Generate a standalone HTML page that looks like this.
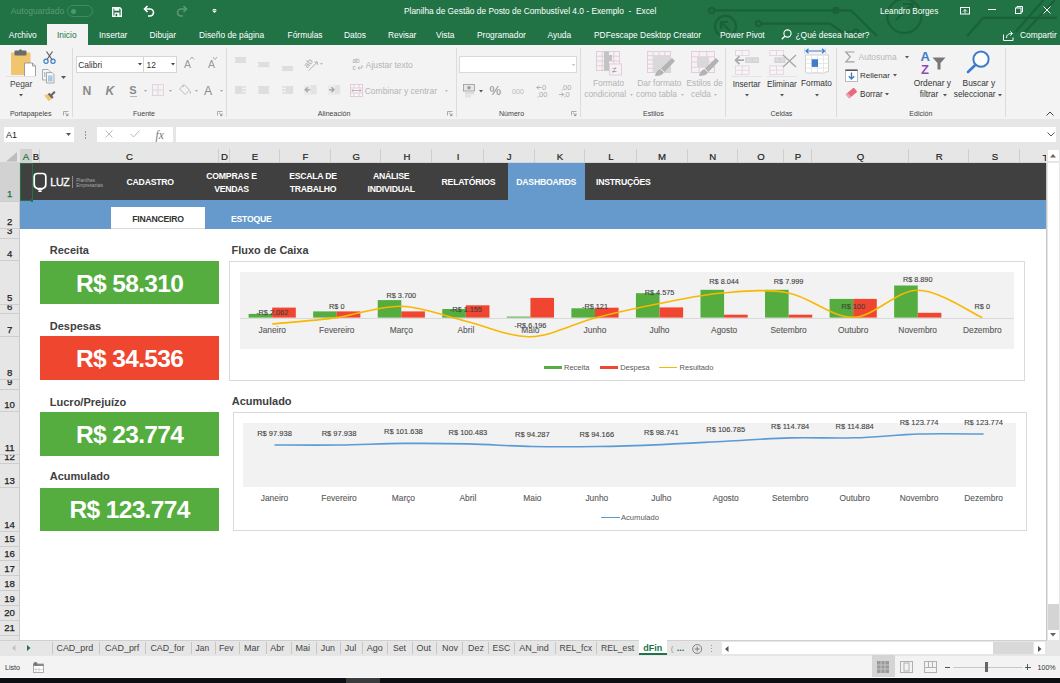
<!DOCTYPE html>
<html><head><meta charset="utf-8">
<style>
*{margin:0;padding:0;box-sizing:border-box}
html,body{width:1060px;height:683px;overflow:hidden;background:#fff;font-family:"Liberation Sans",sans-serif}
.a{position:absolute}
.t{position:absolute;white-space:nowrap;line-height:1}
svg{position:absolute;overflow:visible}
</style></head><body>
<div class="a" style="left:0px;top:0px;width:1060px;height:45px;background:#217346;"></div>
<svg class="a" style="left:0px;top:0px;" width="1060" height="45" viewBox="0 0 1060 45"><g stroke="#1a6139" stroke-width="2.2" fill="none">
<path d="M714 10.4 H851 L877 36"/><circle cx="711.7" cy="10.4" r="2.6"/><circle cx="835.8" cy="10.4" r="2.6"/>
<path d="M761 23.6 H830 L842 32 H852"/><circle cx="758.5" cy="23.6" r="2.6"/><circle cx="856" cy="32" r="2.6"/>
<circle cx="725.5" cy="26.4" r="10.5"/><path d="M730 31 L721 22 M721 29 V22 H728"/>
<circle cx="904.3" cy="16" r="17"/><path d="M896 20 L912.5 4 M903 4 H912.5 V13"/>
<path d="M967 36.3 L983.2 17.8 H1057"/><path d="M1015.4 32.2 L1043.4 0"/><path d="M1024.7 32.2 L1054.8 0"/>
</g></svg>
<div class="t" style="left:10.8px;top:7px;font-size:8.5px;color:#5c9a76;">Autoguardado</div>
<div class="a" style="left:67px;top:5px;width:26px;height:12px;border:1px solid #3f8a5f;border-radius:6px"></div>
<div class="a" style="left:71px;top:9px;width:5px;height:5px;background:#4f9670;border-radius:50%"></div>
<svg class="a" style="left:111.5px;top:6.5px;" width="10" height="10" viewBox="0 0 10 10"><path d="M0.7 0.7 H7.8 L9.3 2.2 V9.3 H0.7 Z" fill="none" stroke="#fff" stroke-width="1.4"/><rect x="2.3" y="0.7" width="5" height="3" fill="#fff"/><rect x="2.5" y="5.5" width="5" height="3.8" fill="#fff"/><rect x="3.6" y="6.8" width="1.6" height="2.5" fill="#217346"/></svg>
<svg class="a" style="left:142px;top:4px;" width="14" height="14" viewBox="0 0 14 14"><path d="M3 5 H8 A3.5 3.5 0 0 1 8 12 H6" stroke="#fff" stroke-width="1.6" fill="none"/><path d="M5.5 2 L2.5 5 L5.5 8" stroke="#fff" stroke-width="1.6" fill="none"/></svg>
<svg class="a" style="left:175px;top:4px;" width="14" height="14" viewBox="0 0 14 14"><path d="M11 5 H6 A3.5 3.5 0 0 0 6 12 H8" stroke="#5c9a76" stroke-width="1.6" fill="none"/><path d="M8.5 2 L11.5 5 L8.5 8" stroke="#5c9a76" stroke-width="1.6" fill="none"/></svg>
<svg class="a" style="left:212px;top:8.5px;" width="5" height="4" viewBox="0 0 5 4"><rect x="0.8" y="0" width="3.4" height="0.9" fill="#fff"/><path d="M0 1.6 H5 L2.5 4 Z" fill="#fff"/></svg>
<div class="t" style="left:404.0px;top:7px;font-size:8.35px;color:#fff;">Planilha de Gestão de Posto de Combustível 4.0 - Exemplo&nbsp; -&nbsp; Excel</div>
<div class="t" style="left:880.0px;top:8px;font-size:8.2px;color:#fff;">Leandro Borges</div>
<svg class="a" style="left:960px;top:6.5px;" width="10" height="7" viewBox="0 0 10 7"><rect x="0.5" y="0.5" width="9" height="6.5" stroke="#fff" fill="none"/><path d="M3 4.5 L5 2.5 L7 4.5 M5 2.5 V6.5" stroke="#fff" fill="none" stroke-width="0.9"/></svg>
<div class="a" style="left:988.3px;top:9px;width:7.5px;height:1px;background:#fff;"></div>
<svg class="a" style="left:1015px;top:6px;" width="8" height="8" viewBox="0 0 8 8"><rect x="0.5" y="2" width="5.5" height="5.5" stroke="#fff" fill="none"/><path d="M2 2 V0.5 H7.5 V6 H6" stroke="#fff" fill="none"/></svg>
<svg class="a" style="left:1042.5px;top:6px;" width="8" height="8" viewBox="0 0 8 8"><path d="M0.5 0.5 L7.5 7.5 M7.5 0.5 L0.5 7.5" stroke="#fff" stroke-width="1"/></svg>
<div class="a" style="left:47px;top:24px;width:41px;height:21px;background:#f3f3f3;"></div>
<div class="t" style="left:8.8px;top:31px;font-size:8.4px;color:#fff;">Archivo</div>
<div class="t" style="left:57.0px;top:31px;font-size:8.4px;color:#217346;">Inicio</div>
<div class="t" style="left:99.0px;top:31px;font-size:8.4px;color:#fff;">Insertar</div>
<div class="t" style="left:149.5px;top:31px;font-size:8.4px;color:#fff;">Dibujar</div>
<div class="t" style="left:199.0px;top:31px;font-size:8.4px;color:#fff;">Diseño de página</div>
<div class="t" style="left:287.6px;top:31px;font-size:8.4px;color:#fff;">Fórmulas</div>
<div class="t" style="left:344.0px;top:31px;font-size:8.4px;color:#fff;">Datos</div>
<div class="t" style="left:388.0px;top:31px;font-size:8.4px;color:#fff;">Revisar</div>
<div class="t" style="left:436.0px;top:31px;font-size:8.4px;color:#fff;">Vista</div>
<div class="t" style="left:477.0px;top:31px;font-size:8.4px;color:#fff;">Programador</div>
<div class="t" style="left:547.6px;top:31px;font-size:8.4px;color:#fff;">Ayuda</div>
<div class="t" style="left:594.0px;top:31px;font-size:8.4px;color:#fff;">PDFescape Desktop Creator</div>
<div class="t" style="left:720.0px;top:31px;font-size:8.4px;color:#fff;">Power Pivot</div>
<svg class="a" style="left:781px;top:29px;" width="11" height="11" viewBox="0 0 11 11"><circle cx="6.5" cy="4.5" r="3.6" stroke="#fff" stroke-width="1.1" fill="none"/><path d="M4 7 L0.8 10.2" stroke="#fff" stroke-width="1.3"/></svg>
<div class="t" style="left:795.5px;top:31px;font-size:8.4px;color:#fff;">¿Qué desea hacer?</div>
<svg class="a" style="left:1003.4px;top:30.5px;" width="12" height="10" viewBox="0 0 12 10"><path d="M0.5 3.5 V9.5 H10 V6.5" stroke="#fff" fill="none"/><path d="M3.5 7 C3.5 3.5 6 2.5 9 2.5 M7.2 0.5 L9.5 2.5 L7.2 4.5" stroke="#fff" fill="none"/></svg>
<div class="t" style="left:1020.0px;top:31px;font-size:8.4px;color:#fff;">Compartir</div>
<div class="a" style="left:0px;top:45px;width:1060px;height:74px;background:#f3f3f3;"></div>
<div class="a" style="left:72px;top:48px;width:1px;height:69px;background:#dcdcdc;"></div>
<div class="a" style="left:226px;top:48px;width:1px;height:69px;background:#dcdcdc;"></div>
<div class="a" style="left:455.5px;top:48px;width:1px;height:69px;background:#dcdcdc;"></div>
<div class="a" style="left:580px;top:48px;width:1px;height:69px;background:#dcdcdc;"></div>
<div class="a" style="left:725px;top:48px;width:1px;height:69px;background:#dcdcdc;"></div>
<div class="a" style="left:836.4px;top:48px;width:1px;height:69px;background:#dcdcdc;"></div>
<div class="a" style="left:1005.4px;top:48px;width:1px;height:69px;background:#dcdcdc;"></div>
<div class="t" style="left:9.9px;top:110px;font-size:7.05px;color:#444;">Portapapeles</div>
<div class="t" style="left:133.0px;top:110px;font-size:7.05px;color:#444;">Fuente</div>
<div class="t" style="left:317.8px;top:110px;font-size:7.05px;color:#444;">Alineación</div>
<div class="t" style="left:499.0px;top:110px;font-size:7.05px;color:#444;">Número</div>
<div class="t" style="left:643.0px;top:110px;font-size:7.05px;color:#444;">Estilos</div>
<div class="t" style="left:770.4px;top:110px;font-size:7.05px;color:#444;">Celdas</div>
<div class="t" style="left:909.3px;top:110px;font-size:7.05px;color:#444;">Edición</div>
<svg class="a" style="left:63px;top:111px;" width="6" height="5" viewBox="0 0 6 5"><path d="M0.5 4.5 V0.5 H5.5" stroke="#999" fill="none" stroke-width="0.8"/><path d="M2 1.8 L5 4.6 M5 2.5 V4.6 H3" stroke="#888" fill="none" stroke-width="0.8"/></svg>
<svg class="a" style="left:216.5px;top:111px;" width="6" height="5" viewBox="0 0 6 5"><path d="M0.5 4.5 V0.5 H5.5" stroke="#999" fill="none" stroke-width="0.8"/><path d="M2 1.8 L5 4.6 M5 2.5 V4.6 H3" stroke="#888" fill="none" stroke-width="0.8"/></svg>
<svg class="a" style="left:446.5px;top:111px;" width="6" height="5" viewBox="0 0 6 5"><path d="M0.5 4.5 V0.5 H5.5" stroke="#999" fill="none" stroke-width="0.8"/><path d="M2 1.8 L5 4.6 M5 2.5 V4.6 H3" stroke="#888" fill="none" stroke-width="0.8"/></svg>
<svg class="a" style="left:570.6px;top:111px;" width="6" height="5" viewBox="0 0 6 5"><path d="M0.5 4.5 V0.5 H5.5" stroke="#999" fill="none" stroke-width="0.8"/><path d="M2 1.8 L5 4.6 M5 2.5 V4.6 H3" stroke="#888" fill="none" stroke-width="0.8"/></svg>
<svg class="a" style="left:10px;top:49px;" width="27" height="29" viewBox="0 0 27 29"><rect x="1" y="3.5" width="19.5" height="22.5" rx="1" fill="#f1c46e"/>
<rect x="4.5" y="1.5" width="12" height="5" rx="1" fill="#6b6b6b"/><circle cx="10.5" cy="1.8" r="1.6" fill="#6b6b6b"/>
<path d="M14.5 14 H22.5 L25.5 17 V27.5 H14.5 Z" fill="#fff" stroke="#8a8a8a" stroke-width="0.8"/><path d="M22.5 14 V17 H25.5" fill="none" stroke="#8a8a8a" stroke-width="0.8"/></svg>
<div class="a" style="left:6px;top:76px;width:30px;height:1px;background:#e2e2e2;"></div>
<div class="t" style="left:9.9px;top:80px;font-size:8.4px;color:#444;">Pegar</div>
<svg class="a" style="left:18.5px;top:94px;" width="4" height="3" viewBox="0 0 4 3"><path d="M0 0 H4 L2 2.5 Z" fill="#555"/></svg>
<svg class="a" style="left:43px;top:51px;" width="13" height="13" viewBox="0 0 13 13"><path d="M3.5 0.5 L9 8.5 M9.5 0.5 L4 8.5" stroke="#555" stroke-width="1.1"/><circle cx="3" cy="10.3" r="2.1" stroke="#3d7cc9" stroke-width="1.2" fill="none"/><circle cx="10" cy="10.3" r="2.1" stroke="#3d7cc9" stroke-width="1.2" fill="none"/></svg>
<svg class="a" style="left:42px;top:69px;" width="14" height="15" viewBox="0 0 14 15"><path d="M0.5 0.5 H6 L8 2.5 V11 H0.5 Z" fill="#f4f4f4" stroke="#999" stroke-width="0.8"/><path d="M4.5 3.5 H10 L12 5.5 V14 H4.5 Z" fill="#f4f4f4" stroke="#999" stroke-width="0.8"/><rect x="6" y="6.5" width="4.5" height="6" fill="#a9c7e8"/><rect x="2" y="3" width="1.5" height="5" fill="#a9c7e8"/></svg>
<svg class="a" style="left:61px;top:76px;" width="5" height="3" viewBox="0 0 5 3"><path d="M0 0 H5 L2.5 3 Z" fill="#555"/></svg>
<svg class="a" style="left:43px;top:91px;" width="13" height="12" viewBox="0 0 13 12"><path d="M1.2 4.4 L5.8 2.8 L9.4 7 L5.8 10.3 Z" fill="#f1c46e"/><path d="M5.6 2.4 L9.8 6.9" stroke="#666" stroke-width="2.2"/><path d="M8 4.6 L11.3 1.3" stroke="#666" stroke-width="2.1" stroke-linecap="round"/></svg>
<div class="a" style="left:76px;top:56px;width:101px;height:17px;background:#fff;border:1px solid #d6d6d6"></div>
<div class="a" style="left:143px;top:57px;width:1px;height:15px;background:#d6d6d6;"></div>
<div class="t" style="left:78.3px;top:61px;font-size:8.4px;color:#333;">Calibri</div>
<div class="t" style="left:146.5px;top:61px;font-size:8.4px;color:#333;">12</div>
<svg class="a" style="left:137.5px;top:63px;" width="4" height="3" viewBox="0 0 4 3"><path d="M0 0 H4 L2 2.5 Z" fill="#444"/></svg>
<svg class="a" style="left:171px;top:63px;" width="4" height="3" viewBox="0 0 4 3"><path d="M0 0 H4 L2 2.5 Z" fill="#444"/></svg>
<div class="t" style="left:184.0px;top:59px;font-size:10.5px;color:#9a9a9a;">A</div>
<svg class="a" style="left:190px;top:57px;" width="4" height="3" viewBox="0 0 4 3"><path d="M0 2.5 L2 0 L4 2.5" fill="none" stroke="#999" stroke-width="0.8"/></svg>
<div class="t" style="left:208.0px;top:59px;font-size:10.5px;color:#9a9a9a;">A</div>
<svg class="a" style="left:213px;top:57px;" width="4" height="3" viewBox="0 0 4 3"><path d="M0 0 L2 2.5 L4 0" fill="none" stroke="#999" stroke-width="0.8"/></svg>
<div class="t" style="left:82.5px;top:85px;font-size:12.2px;color:#8c8c8c;font-weight:bold;">N</div>
<div class="t" style="left:105.5px;top:85px;font-size:12.2px;color:#8c8c8c;font-weight:bold;font-style:italic;">K</div>
<div class="t" style="left:129.2px;top:85px;font-size:11px;color:#8c8c8c;font-weight:bold;">S</div>
<div class="a" style="left:129.5px;top:95.5px;width:7px;height:1px;background:#b5b5b5;"></div>
<svg class="a" style="left:144px;top:89.5px;" width="3" height="2" viewBox="0 0 3 2"><path d="M0 0 H3 L1.5 2 Z" fill="#aaa"/></svg>
<svg class="a" style="left:169px;top:89.5px;" width="3" height="2" viewBox="0 0 3 2"><path d="M0 0 H3 L1.5 2 Z" fill="#aaa"/></svg>
<svg class="a" style="left:194.5px;top:89.5px;" width="3" height="2" viewBox="0 0 3 2"><path d="M0 0 H3 L1.5 2 Z" fill="#aaa"/></svg>
<svg class="a" style="left:219.5px;top:89.5px;" width="3" height="2" viewBox="0 0 3 2"><path d="M0 0 H3 L1.5 2 Z" fill="#aaa"/></svg>
<svg class="a" style="left:152px;top:84px;" width="12" height="12" viewBox="0 0 12 12"><rect x="0.5" y="0.5" width="11" height="11" fill="none" stroke="#e2d3de"/><path d="M6 0.5 V11.5 M0.5 6 H11.5" stroke="#e2d3de"/></svg>
<svg class="a" style="left:178.5px;top:84px;" width="12" height="12" viewBox="0 0 12 12"><path d="M5 0.5 L10.5 6 L6 10.5 L0.5 5 Z" fill="none" stroke="#bbb" stroke-width="1"/><path d="M3 1 L5 3" stroke="#bbb"/><path d="M11 7 Q12 9 11 10" stroke="#bbb" fill="none"/></svg>
<div class="t" style="left:204.0px;top:85px;font-size:12.2px;color:#8c8c8c;">A</div>
<svg class="a" style="left:235.2px;top:56.9px;" width="11" height="6" viewBox="0 0 11 6"><rect x="0" y="0" width="11" height="6" fill="#dedede"/><rect x="0" y="2.6" width="1" height="1" fill="#f0f0f0"/><rect x="10" y="2.6" width="1" height="1" fill="#f0f0f0"/></svg>
<svg class="a" style="left:258.2px;top:61.8px;" width="11.4" height="5.2" viewBox="0 0 11.4 5.2"><rect x="0" y="0" width="11.4" height="5.2" fill="#dedede"/><rect x="0" y="2.2" width="1" height="1" fill="#f0f0f0"/><rect x="10.4" y="2.2" width="1" height="1" fill="#f0f0f0"/></svg>
<svg class="a" style="left:281.8px;top:65.6px;" width="11.2" height="5.1" viewBox="0 0 11.2 5.1"><rect x="0" y="0" width="11.2" height="5.1" fill="#dedede"/><rect x="0" y="2.2" width="1" height="1" fill="#f0f0f0"/><rect x="10.2" y="2.2" width="1" height="1" fill="#f0f0f0"/></svg>
<svg class="a" style="left:303.5px;top:57.5px;" width="18" height="14" viewBox="0 0 18 14"><text x="0" y="0" transform="translate(3.2 10.5) rotate(-50)" font-size="8.2" fill="#a8a8a8" font-family="Liberation Sans">ab</text><path d="M4.5 12.8 L13.3 4 M10.5 4 H13.3 V6.8" stroke="#a8a8a8" fill="none" stroke-width="0.9"/></svg>
<svg class="a" style="left:319.5px;top:63px;" width="3" height="2" viewBox="0 0 3 2"><path d="M0 0 H3 L1.5 2 Z" fill="#bbb"/></svg>
<svg class="a" style="left:235.2px;top:85.9px;" width="11.1" height="8" viewBox="0 0 11.1 8"><rect x="0" y="0" width="7.5" height="8" fill="#dedede"/><rect x="7.5" y="0.3" width="3.6" height="1.6" fill="#dedede"/><rect x="7.5" y="3.2" width="3.6" height="1.6" fill="#dedede"/><rect x="7.5" y="6.1" width="3.6" height="1.6" fill="#dedede"/></svg>
<svg class="a" style="left:258.2px;top:85.9px;" width="11.4" height="8" viewBox="0 0 11.4 8"><rect x="1" y="0" width="9.4" height="8" fill="#dedede"/><rect x="0" y="0.3" width="11.4" height="1.6" fill="#dedede"/><rect x="0" y="3.2" width="11.4" height="1.6" fill="#dedede"/><rect x="0" y="6.1" width="11.4" height="1.6" fill="#dedede"/></svg>
<svg class="a" style="left:281.8px;top:85.9px;" width="11.2" height="8" viewBox="0 0 11.2 8"><rect x="3.6" y="0" width="7.6" height="8" fill="#dedede"/><rect x="0" y="0.3" width="3.6" height="1.6" fill="#dedede"/><rect x="0" y="3.2" width="3.6" height="1.6" fill="#dedede"/><rect x="0" y="6.1" width="3.6" height="1.6" fill="#dedede"/></svg>
<svg class="a" style="left:304.1px;top:85.1px;" width="13" height="10" viewBox="0 0 13 10"><rect x="0" y="0" width="12.7" height="9.4" fill="#e3e3e3"/><rect x="0" y="0" width="7" height="9.4" fill="#ececec"/><path d="M1.3 4.7 H6.3 M3.8 2.2 L1.3 4.7 L3.8 7.2" stroke="#a9a9a9" stroke-width="1.5" fill="none"/></svg>
<svg class="a" style="left:327.6px;top:85.1px;" width="13" height="10" viewBox="0 0 13 10"><rect x="0" y="0" width="12.2" height="9.4" fill="#e3e3e3"/><rect x="0" y="0" width="7" height="9.4" fill="#ececec"/><path d="M1 4.7 H6 M3.5 2.2 L6 4.7 L3.5 7.2" stroke="#a9a9a9" stroke-width="1.5" fill="none"/></svg>
<div class="t" style="left:352.5px;top:58px;font-size:6.5px;color:#aaa;">ab</div>
<div class="t" style="left:352.5px;top:65px;font-size:6.5px;color:#aaa;">c</div>
<svg class="a" style="left:356.5px;top:65px;" width="6" height="5" viewBox="0 0 6 5"><path d="M5 0 V3 H1 M2.5 1.5 L1 3 L2.5 4.5" stroke="#aaa" fill="none" stroke-width="0.8"/></svg>
<div class="t" style="left:365.8px;top:61px;font-size:8.45px;color:#b4b4b4;">Ajustar texto</div>
<svg class="a" style="left:349.5px;top:83.5px;" width="13" height="13" viewBox="0 0 13 13"><rect x="0.5" y="0.5" width="12" height="12" fill="#faf6f9" stroke="#e0cdd9"/><path d="M0.5 4 H12.5 M0.5 9 H12.5 M4 0.5 V4 M9 0.5 V4 M4 9 V12.5 M9 9 V12.5" stroke="#e0cdd9"/><path d="M2 6.5 H11 M3.5 5 L2 6.5 L3.5 8 M9.5 5 L11 6.5 L9.5 8" stroke="#aaa" fill="none" stroke-width="0.8"/></svg>
<div class="t" style="left:364.7px;top:87px;font-size:8.5px;color:#b4b4b4;">Combinar y centrar</div>
<svg class="a" style="left:444.5px;top:90px;" width="3" height="2" viewBox="0 0 3 2"><path d="M0 0 H3 L1.5 2 Z" fill="#bbb"/></svg>
<div class="a" style="left:459px;top:56px;width:118px;height:17px;background:#fff;border:1px solid #d9d9d9"></div>
<svg class="a" style="left:571.5px;top:63.5px;" width="3" height="2" viewBox="0 0 3 2"><path d="M0 0 H3 L1.5 2 Z" fill="#bbb"/></svg>
<svg class="a" style="left:463px;top:84px;" width="13" height="14" viewBox="0 0 13 14"><rect x="0.5" y="0.5" width="11" height="6.5" fill="#e6e6e6" stroke="#999" stroke-width="0.8"/><circle cx="6" cy="3.75" r="1.7" fill="#999"/><rect x="2" y="8" width="9" height="2.5" fill="#ddd"/><rect x="2" y="11" width="6" height="2.5" fill="#e3e3e3"/></svg>
<svg class="a" style="left:479px;top:89.5px;" width="4" height="3" viewBox="0 0 4 3"><path d="M0 0 H4 L2 2.5 Z" fill="#555"/></svg>
<div class="t" style="left:489.5px;top:84px;font-size:13px;color:#8a8a8a;">%</div>
<div class="t" style="left:512.0px;top:88px;font-size:7.3px;color:#bdbdbd;">000</div>
<div class="t" style="left:542.0px;top:84px;font-size:7.5px;color:#aaa;">0</div>
<div class="t" style="left:537.0px;top:91px;font-size:7.5px;color:#aaa;">,00</div>
<svg class="a" style="left:535.5px;top:85px;" width="6" height="5" viewBox="0 0 6 5"><path d="M5.5 2.5 H0.8 M2.8 0.5 L0.8 2.5 L2.8 4.5" stroke="#aaa" fill="none" stroke-width="0.9"/></svg>
<div class="t" style="left:561.0px;top:84px;font-size:7.5px;color:#aaa;">,00</div>
<div class="t" style="left:563.5px;top:91px;font-size:7.5px;color:#aaa;">,0</div>
<svg class="a" style="left:558.5px;top:92px;" width="6" height="5" viewBox="0 0 6 5"><path d="M0 2.5 H4.7 M2.7 0.5 L4.7 2.5 L2.7 4.5" stroke="#aaa" fill="none" stroke-width="0.9"/></svg>
<svg class="a" style="left:596.3px;top:51.4px;" width="27" height="25" viewBox="0 0 27 25"><rect x="0.5" y="0.5" width="23" height="19" fill="#f7f1f5" stroke="#e0cfdb"/><path d="M6.2 0.5 V19.5" stroke="#e0cfdb"/><path d="M12.0 0.5 V19.5" stroke="#e0cfdb"/><path d="M17.8 0.5 V19.5" stroke="#e0cfdb"/><path d="M0.5 5.2 H23.5" stroke="#e0cfdb"/><path d="M0.5 10.0 H23.5" stroke="#e0cfdb"/><path d="M0.5 14.8 H23.5" stroke="#e0cfdb"/><rect x="8" y="0.5" width="5" height="19" fill="#c3c3c3"/><rect x="13" y="4" width="3" height="6" fill="#c3c3c3"/><rect x="13.5" y="13" width="12" height="11" fill="#f7f1f5" stroke="#e0cfdb"/><text x="16" y="22" font-size="9" fill="#999" font-family="Liberation Sans">≠</text></svg>
<div class="t" style="left:593.0px;top:79px;font-size:8.4px;color:#b4b4b4;">Formato</div>
<div class="t" style="left:584.2px;top:90px;font-size:8.4px;color:#b4b4b4;">condicional</div>
<svg class="a" style="left:630.3px;top:93.5px;" width="3" height="2" viewBox="0 0 3 2"><path d="M0 0 H3 L1.5 2 Z" fill="#bbb"/></svg>
<svg class="a" style="left:646.5px;top:51.4px;" width="28" height="25" viewBox="0 0 28 25"><rect x="0.5" y="0.5" width="23" height="21" fill="#f7f1f5" stroke="#e0cfdb"/><path d="M6.2 0.5 V21.5" stroke="#e0cfdb"/><path d="M12.0 0.5 V21.5" stroke="#e0cfdb"/><path d="M17.8 0.5 V21.5" stroke="#e0cfdb"/><path d="M0.5 4.7 H23.5" stroke="#e0cfdb"/><path d="M0.5 8.9 H23.5" stroke="#e0cfdb"/><path d="M0.5 13.1 H23.5" stroke="#e0cfdb"/><path d="M0.5 17.3 H23.5" stroke="#e0cfdb"/><rect x="6.5" y="5" width="17" height="16" fill="#d9d9d9"/><path d="M8 25 Q9 19.5 13.5 18 L25 7 L28 10 L17 21.5 Q15 25 8 25 Z" fill="#b3b3b3"/><path d="M13.5 18 Q15.5 18.5 17 21.5" stroke="#f3f3f3" stroke-width="1" fill="none"/></svg>
<div class="t" style="left:637.3px;top:79px;font-size:8.4px;color:#b4b4b4;">Dar formato</div>
<div class="t" style="left:636.0px;top:90px;font-size:8.4px;color:#b4b4b4;">como tabla</div>
<svg class="a" style="left:680.5px;top:93.5px;" width="3" height="2" viewBox="0 0 3 2"><path d="M0 0 H3 L1.5 2 Z" fill="#bbb"/></svg>
<svg class="a" style="left:691px;top:51.4px;" width="28" height="25" viewBox="0 0 28 25"><rect x="0.5" y="0.5" width="23" height="21" fill="#f7f1f5" stroke="#e0cfdb"/><path d="M8.2 0.5 V21.5" stroke="#e0cfdb"/><path d="M15.8 0.5 V21.5" stroke="#e0cfdb"/><path d="M0.5 5.8 H23.5" stroke="#e0cfdb"/><path d="M0.5 11.0 H23.5" stroke="#e0cfdb"/><path d="M0.5 16.2 H23.5" stroke="#e0cfdb"/><rect x="6" y="6" width="12" height="10" fill="#d9d9d9"/><path d="M8 25 Q9 19.5 13.5 18 L25 7 L28 10 L17 21.5 Q15 25 8 25 Z" fill="#b3b3b3"/><path d="M13.5 18 Q15.5 18.5 17 21.5" stroke="#f3f3f3" stroke-width="1" fill="none"/></svg>
<div class="t" style="left:686.4px;top:79px;font-size:8.4px;color:#b4b4b4;">Estilos de</div>
<div class="t" style="left:691.0px;top:90px;font-size:8.4px;color:#b4b4b4;">celda</div>
<svg class="a" style="left:714.3px;top:93.5px;" width="3" height="2" viewBox="0 0 3 2"><path d="M0 0 H3 L1.5 2 Z" fill="#bbb"/></svg>
<svg class="a" style="left:733px;top:49px;" width="28" height="27" viewBox="0 0 28 27"><g transform="translate(2,1)"><rect x="0.5" y="0.5" width="13.5" height="5" fill="#faf4f8" stroke="#e3d8e0"/><path d="M7.2 0.5 V5.5" stroke="#e3d8e0"/></g><g transform="translate(2,16.4)"><rect x="0.5" y="0.5" width="13.5" height="8.5" fill="#faf4f8" stroke="#e3d8e0"/><path d="M7.2 0.5 V9.0" stroke="#e3d8e0"/><path d="M0.5 4.8 H14.0" stroke="#e3d8e0"/></g><g transform="translate(12.3,8.4)"><rect x="0.5" y="0.5" width="12.5" height="4.5" fill="#dcdcdc" stroke="#cfcfcf"/><path d="M6.8 0.5 V5.0" stroke="#cfcfcf"/></g><path d="M11 11.2 H2.5 M6.5 7.2 L2.5 11.2 L6.5 15.2" stroke="#aaa" stroke-width="1.7" fill="none"/></svg>
<div class="a" style="left:731px;top:76px;width:31px;height:1px;background:#e3e3e3;"></div>
<div class="a" style="left:767px;top:76px;width:30px;height:1px;background:#e3e3e3;"></div>
<div class="t" style="left:732.7px;top:81px;font-size:8.2px;color:#333;">Insertar</div>
<svg class="a" style="left:744.5px;top:94px;" width="4" height="3" viewBox="0 0 4 3"><path d="M0 0 H4 L2 2.5 Z" fill="#555"/></svg>
<svg class="a" style="left:769px;top:49px;" width="28" height="27" viewBox="0 0 28 27"><g transform="translate(0.3,1)"><rect x="0.5" y="0.5" width="13.5" height="5" fill="#faf4f8" stroke="#e3d8e0"/><path d="M7.2 0.5 V5.5" stroke="#e3d8e0"/></g><g transform="translate(0.3,16.4)"><rect x="0.5" y="0.5" width="13.5" height="8.5" fill="#faf4f8" stroke="#e3d8e0"/><path d="M7.2 0.5 V9.0" stroke="#e3d8e0"/><path d="M0.5 4.8 H14.0" stroke="#e3d8e0"/></g><g transform="translate(5.4,8.4)"><rect x="0.5" y="0.5" width="10" height="4.5" fill="#dcdcdc" stroke="#cfcfcf"/><path d="M5.5 0.5 V5.0" stroke="#cfcfcf"/></g><path d="M14 6 L27 18 M27 6 L14 18" stroke="#aaa" stroke-width="1.5"/></svg>
<div class="t" style="left:766.9px;top:80px;font-size:8.3px;color:#333;">Eliminar</div>
<svg class="a" style="left:780.2px;top:94px;" width="4" height="3" viewBox="0 0 4 3"><path d="M0 0 H4 L2 2.5 Z" fill="#555"/></svg>
<svg class="a" style="left:804px;top:48px;" width="27" height="28" viewBox="0 0 27 28"><path d="M2 3 H20.5 M4.5 0.8 L2 3 L4.5 5.2 M18 0.8 L20.5 3 L18 5.2" stroke="#3d7cc9" stroke-width="1.2" fill="none"/><path d="M0.8 0.5 V5.5 M21.5 0.5 V5.5" stroke="#a9c5e8" stroke-width="0.8"/><path d="M1.5 7 H24.5 V24 Q22 23 20 25 H14 Q12 24 10 25 H3.5 Q1.5 25 1.5 23 Z" fill="#fff" stroke="#d0d0d0"/><path d="M7.5 7 V24 M13.5 7 V24 M19.5 7 V24 M1.5 11 H24.5 M1.5 15.5 H24.5 M1.5 20 H24.5" stroke="#e2e2e2" stroke-width="0.8"/><rect x="7.7" y="11.3" width="6.3" height="7.6" fill="#3d7cc9"/></svg>
<div class="t" style="left:801.0px;top:79px;font-size:8.3px;color:#333;">Formato</div>
<svg class="a" style="left:814.5px;top:94px;" width="4" height="3" viewBox="0 0 4 3"><path d="M0 0 H4 L2 2.5 Z" fill="#555"/></svg>
<svg class="a" style="left:845px;top:50.5px;" width="10" height="12" viewBox="0 0 10 12"><path d="M9.5 1 H0.8 L5.2 5.8 L0.8 10.8 H9.5" stroke="#a0a0a0" stroke-width="1.2" fill="none"/></svg>
<div class="t" style="left:858.6px;top:53px;font-size:8.45px;color:#b8b8b8;">Autosuma</div>
<svg class="a" style="left:904.5px;top:55.5px;" width="4" height="3" viewBox="0 0 4 3"><path d="M0 0 H4 L2 2.5 Z" fill="#555"/></svg>
<svg class="a" style="left:844.5px;top:68.5px;" width="13" height="13" viewBox="0 0 13 13"><rect x="0.5" y="1" width="12" height="11.5" fill="#fff" stroke="#aaa" stroke-width="0.8"/><rect x="0.5" y="0.5" width="12" height="1.5" fill="#555"/><path d="M6.5 3.5 V10 M3.8 7.3 L6.5 10 L9.2 7.3" stroke="#3d7cc9" stroke-width="1.4" fill="none"/></svg>
<div class="t" style="left:860.0px;top:72px;font-size:8.0px;color:#333;">Rellenar</div>
<svg class="a" style="left:892.5px;top:74px;" width="4" height="3" viewBox="0 0 4 3"><path d="M0 0 H4 L2 2.5 Z" fill="#555"/></svg>
<svg class="a" style="left:844.5px;top:87px;" width="13" height="12" viewBox="0 0 13 12"><g transform="rotate(-40 6.5 6)"><rect x="1.2" y="3.3" width="10.6" height="5.4" rx="0.8" fill="#e8687d"/><rect x="1.2" y="3.3" width="2.6" height="5.4" fill="#f0a0ad"/></g></svg>
<div class="t" style="left:860.0px;top:91px;font-size:8.2px;color:#333;">Borrar</div>
<svg class="a" style="left:885px;top:93px;" width="4" height="3" viewBox="0 0 4 3"><path d="M0 0 H4 L2 2.5 Z" fill="#555"/></svg>
<div class="t" style="left:920.5px;top:50px;font-size:13px;color:#3d7cc9;font-weight:bold;">A</div>
<div class="t" style="left:921.0px;top:63px;font-size:13px;color:#8e4dbd;font-weight:bold;">Z</div>
<svg class="a" style="left:932px;top:56.5px;" width="14" height="13" viewBox="0 0 14 13"><path d="M0.5 0.5 H13.5 L8.5 6 V12.5 H5.5 V6 Z" fill="#777"/></svg>
<div class="t" style="left:913.8px;top:79px;font-size:8.4px;color:#333;">Ordenar y</div>
<div class="t" style="left:919.7px;top:90px;font-size:8.4px;color:#333;">filtrar</div>
<svg class="a" style="left:942.5px;top:93.5px;" width="4" height="3" viewBox="0 0 4 3"><path d="M0 0 H4 L2 2.5 Z" fill="#555"/></svg>
<svg class="a" style="left:966px;top:49px;" width="24" height="25" viewBox="0 0 24 25"><circle cx="15" cy="10.2" r="7.6" fill="#fff" stroke="#3d7cc9" stroke-width="2"/><path d="M9.5 15.8 L2 23" stroke="#3d7cc9" stroke-width="2.6" stroke-linecap="round"/></svg>
<div class="t" style="left:962.6px;top:79px;font-size:8.4px;color:#333;">Buscar y</div>
<div class="t" style="left:953.8px;top:91px;font-size:8.25px;color:#333;">seleccionar</div>
<svg class="a" style="left:998.3px;top:93.5px;" width="4" height="3" viewBox="0 0 4 3"><path d="M0 0 H4 L2 2.5 Z" fill="#555"/></svg>
<svg class="a" style="left:1045.5px;top:110.5px;" width="8" height="5" viewBox="0 0 8 5"><path d="M0.5 4.5 L4 1 L7.5 4.5" stroke="#444" fill="none" stroke-width="1"/></svg>
<div class="a" style="left:0px;top:119px;width:1060px;height:30px;background:#e6e6e6;"></div>
<div class="a" style="left:4px;top:127px;width:70px;height:15px;background:#fff;"></div>
<div class="t" style="left:6.0px;top:131px;font-size:9px;color:#222;">A1</div>
<svg class="a" style="left:66px;top:132.5px;" width="5" height="3" viewBox="0 0 5 3"><path d="M0 0 H5 L2.5 3 Z" fill="#555"/></svg>
<div class="a" style="left:85px;top:131px;width:1px;height:1.5px;background:#999;"></div>
<div class="a" style="left:85px;top:134px;width:1px;height:1.5px;background:#999;"></div>
<div class="a" style="left:85px;top:137px;width:1px;height:1.5px;background:#999;"></div>
<div class="a" style="left:96.5px;top:127px;width:76px;height:15px;background:#fff;"></div>
<svg class="a" style="left:105px;top:130px;" width="8" height="8" viewBox="0 0 8 8"><path d="M0.5 0.5 L7.5 7.5 M7.5 0.5 L0.5 7.5" stroke="#bbb" stroke-width="1"/></svg>
<svg class="a" style="left:130px;top:130px;" width="10" height="8" viewBox="0 0 10 8"><path d="M0.5 4 L3.5 7 L9.5 0.5" stroke="#bbb" stroke-width="1" fill="none"/></svg>
<div class="t" style="left:155.5px;top:130px;font-size:11.5px;color:#777;font-family:'Liberation Serif',serif;font-style:italic;">fx</div>
<div class="a" style="left:176px;top:127px;width:880px;height:15px;background:#fff;"></div>
<svg class="a" style="left:1047px;top:132px;" width="8" height="5" viewBox="0 0 8 5"><path d="M0.5 0.5 L4 4 L7.5 0.5" stroke="#555" fill="none" stroke-width="1"/></svg>
<div class="a" style="left:0px;top:149px;width:1047px;height:14px;background:#e6e6e6;"></div>
<div class="a" style="left:0px;top:162px;width:1047px;height:1px;background:#d4d4d4;"></div>
<svg class="a" style="left:5px;top:152px;" width="13" height="10" viewBox="0 0 13 10"><path d="M12 0 V9.5 H1 Z" fill="#bdbdbd"/></svg>
<div class="a" style="left:20px;top:149px;width:12px;height:14px;background:#d2d2d2;"></div>
<div class="a" style="left:31px;top:149px;width:1px;height:14px;background:#cfcfcf;"></div>
<div class="t" style="left:-124.0px;width:300px;text-align:center;top:152px;font-size:9.6px;color:#217346;-webkit-text-stroke:0.2px #217346;">A</div>
<div class="a" style="left:39px;top:149px;width:1px;height:14px;background:#cfcfcf;"></div>
<div class="t" style="left:-114.0px;width:300px;text-align:center;top:152px;font-size:9.6px;color:#222;-webkit-text-stroke:0.2px #222;">B</div>
<div class="a" style="left:218px;top:149px;width:1px;height:14px;background:#cfcfcf;"></div>
<div class="t" style="left:-20.5px;width:300px;text-align:center;top:152px;font-size:9.6px;color:#222;-webkit-text-stroke:0.2px #222;">C</div>
<div class="a" style="left:229px;top:149px;width:1px;height:14px;background:#cfcfcf;"></div>
<div class="t" style="left:74.5px;width:300px;text-align:center;top:152px;font-size:9.6px;color:#222;-webkit-text-stroke:0.2px #222;">D</div>
<div class="a" style="left:279px;top:149px;width:1px;height:14px;background:#cfcfcf;"></div>
<div class="t" style="left:105.0px;width:300px;text-align:center;top:152px;font-size:9.6px;color:#222;-webkit-text-stroke:0.2px #222;">E</div>
<div class="a" style="left:330px;top:149px;width:1px;height:14px;background:#cfcfcf;"></div>
<div class="t" style="left:155.5px;width:300px;text-align:center;top:152px;font-size:9.6px;color:#222;-webkit-text-stroke:0.2px #222;">F</div>
<div class="a" style="left:380px;top:149px;width:1px;height:14px;background:#cfcfcf;"></div>
<div class="t" style="left:206.2px;width:300px;text-align:center;top:152px;font-size:9.6px;color:#222;-webkit-text-stroke:0.2px #222;">G</div>
<div class="a" style="left:431px;top:149px;width:1px;height:14px;background:#cfcfcf;"></div>
<div class="t" style="left:256.9px;width:300px;text-align:center;top:152px;font-size:9.6px;color:#222;-webkit-text-stroke:0.2px #222;">H</div>
<div class="a" style="left:483px;top:149px;width:1px;height:14px;background:#cfcfcf;"></div>
<div class="t" style="left:308.0px;width:300px;text-align:center;top:152px;font-size:9.6px;color:#222;-webkit-text-stroke:0.2px #222;">I</div>
<div class="a" style="left:534px;top:149px;width:1px;height:14px;background:#cfcfcf;"></div>
<div class="t" style="left:359.1px;width:300px;text-align:center;top:152px;font-size:9.6px;color:#222;-webkit-text-stroke:0.2px #222;">J</div>
<div class="a" style="left:584px;top:149px;width:1px;height:14px;background:#cfcfcf;"></div>
<div class="t" style="left:409.9px;width:300px;text-align:center;top:152px;font-size:9.6px;color:#222;-webkit-text-stroke:0.2px #222;">K</div>
<div class="a" style="left:636px;top:149px;width:1px;height:14px;background:#cfcfcf;"></div>
<div class="t" style="left:460.9px;width:300px;text-align:center;top:152px;font-size:9.6px;color:#222;-webkit-text-stroke:0.2px #222;">L</div>
<div class="a" style="left:687px;top:149px;width:1px;height:14px;background:#cfcfcf;"></div>
<div class="t" style="left:512.0px;width:300px;text-align:center;top:152px;font-size:9.6px;color:#222;-webkit-text-stroke:0.2px #222;">M</div>
<div class="a" style="left:737px;top:149px;width:1px;height:14px;background:#cfcfcf;"></div>
<div class="t" style="left:562.8px;width:300px;text-align:center;top:152px;font-size:9.6px;color:#222;-webkit-text-stroke:0.2px #222;">N</div>
<div class="a" style="left:783px;top:149px;width:1px;height:14px;background:#cfcfcf;"></div>
<div class="t" style="left:611.0px;width:300px;text-align:center;top:152px;font-size:9.6px;color:#222;-webkit-text-stroke:0.2px #222;">O</div>
<div class="a" style="left:811px;top:149px;width:1px;height:14px;background:#cfcfcf;"></div>
<div class="t" style="left:648.0px;width:300px;text-align:center;top:152px;font-size:9.6px;color:#222;-webkit-text-stroke:0.2px #222;">P</div>
<div class="a" style="left:908px;top:149px;width:1px;height:14px;background:#cfcfcf;"></div>
<div class="t" style="left:710.5px;width:300px;text-align:center;top:152px;font-size:9.6px;color:#222;-webkit-text-stroke:0.2px #222;">Q</div>
<div class="a" style="left:968px;top:149px;width:1px;height:14px;background:#cfcfcf;"></div>
<div class="t" style="left:789.2px;width:300px;text-align:center;top:152px;font-size:9.6px;color:#222;-webkit-text-stroke:0.2px #222;">R</div>
<div class="a" style="left:1019px;top:149px;width:1px;height:14px;background:#cfcfcf;"></div>
<div class="t" style="left:844.9px;width:300px;text-align:center;top:152px;font-size:9.6px;color:#222;-webkit-text-stroke:0.2px #222;">S</div>
<div class="a" style="left:1069px;top:149px;width:1px;height:14px;background:#cfcfcf;"></div>
<div class="a" style="left:1000px;top:149px;width:46.5px;height:14px;overflow:hidden">
<div class="t" style="left:-104.5px;width:300px;text-align:center;top:4px;font-size:9.6px;color:#222;-webkit-text-stroke:0.2px #222;">T</div>
</div>
<div class="a" style="left:0px;top:163px;width:20px;height:478px;background:#e6e6e6;"></div>
<div class="a" style="left:19px;top:163px;width:1px;height:478px;background:#c9c9c9;"></div>
<div class="a" style="left:0px;top:163px;width:19px;height:38px;background:#d2d2d2;"></div>
<div class="a" style="left:0px;top:201px;width:19px;height:1px;background:#cdcdcd;"></div>
<div class="a" style="left:0px;top:228px;width:19px;height:1px;background:#cdcdcd;"></div>
<div class="a" style="left:0px;top:238px;width:19px;height:1px;background:#cdcdcd;"></div>
<div class="a" style="left:0px;top:260px;width:19px;height:1px;background:#cdcdcd;"></div>
<div class="a" style="left:0px;top:304px;width:19px;height:1px;background:#cdcdcd;"></div>
<div class="a" style="left:0px;top:313px;width:19px;height:1px;background:#cdcdcd;"></div>
<div class="a" style="left:0px;top:336px;width:19px;height:1px;background:#cdcdcd;"></div>
<div class="a" style="left:0px;top:379px;width:19px;height:1px;background:#cdcdcd;"></div>
<div class="a" style="left:0px;top:389px;width:19px;height:1px;background:#cdcdcd;"></div>
<div class="a" style="left:0px;top:411px;width:19px;height:1px;background:#cdcdcd;"></div>
<div class="a" style="left:0px;top:454px;width:19px;height:1px;background:#cdcdcd;"></div>
<div class="a" style="left:0px;top:463px;width:19px;height:1px;background:#cdcdcd;"></div>
<div class="a" style="left:0px;top:487px;width:19px;height:1px;background:#cdcdcd;"></div>
<div class="a" style="left:0px;top:531px;width:19px;height:1px;background:#cdcdcd;"></div>
<div class="a" style="left:0px;top:546px;width:19px;height:1px;background:#cdcdcd;"></div>
<div class="a" style="left:0px;top:560px;width:19px;height:1px;background:#cdcdcd;"></div>
<div class="a" style="left:0px;top:575px;width:19px;height:1px;background:#cdcdcd;"></div>
<div class="a" style="left:0px;top:590px;width:19px;height:1px;background:#cdcdcd;"></div>
<div class="a" style="left:0px;top:605px;width:19px;height:1px;background:#cdcdcd;"></div>
<div class="a" style="left:0px;top:620px;width:19px;height:1px;background:#cdcdcd;"></div>
<div class="a" style="left:0px;top:635px;width:19px;height:1px;background:#cdcdcd;"></div>
<div class="a" style="left:0px;top:650px;width:19px;height:1px;background:#cdcdcd;"></div>
<div class="a" style="left:0;top:164px;width:19px;height:37px;overflow:hidden">
<div class="t" style="left:-140.4px;width:300px;text-align:center;top:25px;font-size:9.6px;color:#217346;-webkit-text-stroke:0.25px #217346;">1</div>
</div>
<div class="a" style="left:0;top:202px;width:19px;height:26px;overflow:hidden">
<div class="t" style="left:-140.4px;width:300px;text-align:center;top:15px;font-size:9.6px;color:#222;-webkit-text-stroke:0.25px #222;">2</div>
</div>
<div class="a" style="left:0;top:229px;width:19px;height:9px;overflow:hidden">
<div class="t" style="left:-140.4px;width:300px;text-align:center;top:-3px;font-size:9.6px;color:#222;-webkit-text-stroke:0.25px #222;">3</div>
</div>
<div class="a" style="left:0;top:239px;width:19px;height:21px;overflow:hidden">
<div class="t" style="left:-140.4px;width:300px;text-align:center;top:10px;font-size:9.6px;color:#222;-webkit-text-stroke:0.25px #222;">4</div>
</div>
<div class="a" style="left:0;top:261px;width:19px;height:43px;overflow:hidden">
<div class="t" style="left:-140.4px;width:300px;text-align:center;top:32px;font-size:9.6px;color:#222;-webkit-text-stroke:0.25px #222;">5</div>
</div>
<div class="a" style="left:0;top:305px;width:19px;height:8px;overflow:hidden">
<div class="t" style="left:-140.4px;width:300px;text-align:center;top:-3px;font-size:9.6px;color:#222;-webkit-text-stroke:0.25px #222;">6</div>
</div>
<div class="a" style="left:0;top:314px;width:19px;height:22px;overflow:hidden">
<div class="t" style="left:-140.4px;width:300px;text-align:center;top:11px;font-size:9.6px;color:#222;-webkit-text-stroke:0.25px #222;">7</div>
</div>
<div class="a" style="left:0;top:337px;width:19px;height:42px;overflow:hidden">
<div class="t" style="left:-140.4px;width:300px;text-align:center;top:31px;font-size:9.6px;color:#222;-webkit-text-stroke:0.25px #222;">8</div>
</div>
<div class="a" style="left:0;top:380px;width:19px;height:9px;overflow:hidden">
<div class="t" style="left:-140.4px;width:300px;text-align:center;top:-3px;font-size:9.6px;color:#222;-webkit-text-stroke:0.25px #222;">9</div>
</div>
<div class="a" style="left:0;top:390px;width:19px;height:21px;overflow:hidden">
<div class="t" style="left:-140.4px;width:300px;text-align:center;top:10px;font-size:9.6px;color:#222;-webkit-text-stroke:0.25px #222;">10</div>
</div>
<div class="a" style="left:0;top:412px;width:19px;height:42px;overflow:hidden">
<div class="t" style="left:-140.4px;width:300px;text-align:center;top:31px;font-size:9.6px;color:#222;-webkit-text-stroke:0.25px #222;">11</div>
</div>
<div class="a" style="left:0;top:455px;width:19px;height:8px;overflow:hidden">
<div class="t" style="left:-140.4px;width:300px;text-align:center;top:-3px;font-size:9.6px;color:#222;-webkit-text-stroke:0.25px #222;">12</div>
</div>
<div class="a" style="left:0;top:464px;width:19px;height:23px;overflow:hidden">
<div class="t" style="left:-140.4px;width:300px;text-align:center;top:12px;font-size:9.6px;color:#222;-webkit-text-stroke:0.25px #222;">13</div>
</div>
<div class="a" style="left:0;top:488px;width:19px;height:43px;overflow:hidden">
<div class="t" style="left:-140.4px;width:300px;text-align:center;top:32px;font-size:9.6px;color:#222;-webkit-text-stroke:0.25px #222;">14</div>
</div>
<div class="a" style="left:0;top:532px;width:19px;height:14px;overflow:hidden">
<div class="t" style="left:-140.4px;width:300px;text-align:center;top:2px;font-size:9.6px;color:#222;-webkit-text-stroke:0.25px #222;">15</div>
</div>
<div class="a" style="left:0;top:547px;width:19px;height:13px;overflow:hidden">
<div class="t" style="left:-140.4px;width:300px;text-align:center;top:2px;font-size:9.6px;color:#222;-webkit-text-stroke:0.25px #222;">16</div>
</div>
<div class="a" style="left:0;top:561px;width:19px;height:14px;overflow:hidden">
<div class="t" style="left:-140.4px;width:300px;text-align:center;top:3px;font-size:9.6px;color:#222;-webkit-text-stroke:0.25px #222;">17</div>
</div>
<div class="a" style="left:0;top:576px;width:19px;height:14px;overflow:hidden">
<div class="t" style="left:-140.4px;width:300px;text-align:center;top:3px;font-size:9.6px;color:#222;-webkit-text-stroke:0.25px #222;">18</div>
</div>
<div class="a" style="left:0;top:591px;width:19px;height:14px;overflow:hidden">
<div class="t" style="left:-140.4px;width:300px;text-align:center;top:3px;font-size:9.6px;color:#222;-webkit-text-stroke:0.25px #222;">19</div>
</div>
<div class="a" style="left:0;top:606px;width:19px;height:14px;overflow:hidden">
<div class="t" style="left:-140.4px;width:300px;text-align:center;top:2px;font-size:9.6px;color:#222;-webkit-text-stroke:0.25px #222;">20</div>
</div>
<div class="a" style="left:0;top:621px;width:19px;height:14px;overflow:hidden">
<div class="t" style="left:-140.4px;width:300px;text-align:center;top:2px;font-size:9.6px;color:#222;-webkit-text-stroke:0.25px #222;">21</div>
</div>
<div class="a" style="left:0;top:636px;width:19px;height:14px;overflow:hidden">
<div class="t" style="left:-140.4px;width:300px;text-align:center;top:2px;font-size:9.6px;color:#222;-webkit-text-stroke:0.25px #222;">22</div>
</div>
<div class="a" style="left:20px;top:163px;width:1026px;height:37px;background:#404040;"></div>
<div class="a" style="left:20px;top:200px;width:1026px;height:28.5px;background:#6699cc;"></div>
<div class="a" style="left:508px;top:163px;width:77px;height:37px;background:#6699cc;"></div>
<div class="a" style="left:19.5px;top:163px;width:13.5px;height:38px;border:1.6px solid #217346"></div>
<div class="a" style="left:30.8px;top:199px;width:2.6px;height:2.6px;background:#217346;"></div>
<svg class="a" style="left:33px;top:172px;" width="16" height="22" viewBox="0 0 16 22"><path d="M4.2 1.5 H9.8 Q12.8 1.5 12.8 4.5 V12.5 Q12.8 15.5 9.8 16.5 H4.2 Q1.2 15.5 1.2 12.5 V4.5 Q1.2 1.5 4.2 1.5 Z" stroke="#fff" stroke-width="1.7" fill="none"/><path d="M4.5 16.5 Q7 19.5 9.5 16.5" stroke="#fff" stroke-width="1.5" fill="none"/><rect x="5.2" y="18.5" width="3.6" height="1.6" rx="0.8" fill="#fff"/></svg>
<div class="t" style="left:50.3px;top:177px;font-size:10.7px;color:#fff;letter-spacing:-0.3px;-webkit-text-stroke:0.3px #fff;">LUZ</div>
<div class="a" style="left:72px;top:176px;width:1px;height:11.5px;background:#8a8a8a;"></div>
<div class="t" style="left:76.3px;top:179px;font-size:4.6px;color:#a8a8a8;">Planilhas</div>
<div class="t" style="left:76.3px;top:184px;font-size:4.6px;color:#a8a8a8;">Empresariais</div>
<div class="t" style="left:0.2px;width:300px;text-align:center;top:178px;font-size:8.7px;color:#fff;font-weight:bold;letter-spacing:-0.25px;">CADASTRO</div>
<div class="t" style="left:81.5px;width:300px;text-align:center;top:172px;font-size:8.7px;color:#fff;font-weight:bold;letter-spacing:-0.25px;">COMPRAS E</div>
<div class="t" style="left:81.5px;width:300px;text-align:center;top:185px;font-size:8.7px;color:#fff;font-weight:bold;letter-spacing:-0.25px;">VENDAS</div>
<div class="t" style="left:163.0px;width:300px;text-align:center;top:172px;font-size:8.7px;color:#fff;font-weight:bold;letter-spacing:-0.25px;">ESCALA DE</div>
<div class="t" style="left:163.0px;width:300px;text-align:center;top:185px;font-size:8.7px;color:#fff;font-weight:bold;letter-spacing:-0.25px;">TRABALHO</div>
<div class="t" style="left:241.2px;width:300px;text-align:center;top:172px;font-size:8.7px;color:#fff;font-weight:bold;letter-spacing:-0.25px;">ANÁLISE</div>
<div class="t" style="left:241.2px;width:300px;text-align:center;top:185px;font-size:8.7px;color:#fff;font-weight:bold;letter-spacing:-0.25px;">INDIVIDUAL</div>
<div class="t" style="left:318.5px;width:300px;text-align:center;top:178px;font-size:8.7px;color:#fff;font-weight:bold;letter-spacing:-0.25px;">RELATÓRIOS</div>
<div class="t" style="left:396.2px;width:300px;text-align:center;top:178px;font-size:8.7px;color:#fff;font-weight:bold;letter-spacing:-0.25px;">DASHBOARDS</div>
<div class="t" style="left:473.3px;width:300px;text-align:center;top:178px;font-size:8.7px;color:#fff;font-weight:bold;letter-spacing:-0.25px;">INSTRUÇÕES</div>
<div class="a" style="left:111px;top:207px;width:93.5px;height:21.5px;background:#fff;"></div>
<div class="a" style="left:111px;top:228px;width:93.5px;height:1px;background:#dcdcdc;"></div>
<div class="t" style="left:8.0px;width:300px;text-align:center;top:215px;font-size:8.7px;color:#333;font-weight:bold;letter-spacing:-0.25px;">FINANCEIRO</div>
<div class="t" style="left:101.2px;width:300px;text-align:center;top:215px;font-size:8.7px;color:#fff;font-weight:bold;letter-spacing:-0.25px;">ESTOQUE</div>
<div class="t" style="left:49.8px;top:245px;font-size:11px;color:#404040;font-weight:bold;">Receita</div>
<div class="a" style="left:40px;top:260.8px;width:179px;height:43.2px;background:#54ad3e;"></div>
<div class="t" style="left:-20.4px;width:300px;text-align:center;top:272px;font-size:24.5px;color:#fff;font-weight:bold;letter-spacing:-0.65px;">R$ 58.310</div>
<div class="t" style="left:49.8px;top:321px;font-size:11px;color:#404040;font-weight:bold;">Despesas</div>
<div class="a" style="left:40px;top:336.3px;width:179px;height:43.3px;background:#ef4630;"></div>
<div class="t" style="left:-20.4px;width:300px;text-align:center;top:347px;font-size:24.5px;color:#fff;font-weight:bold;letter-spacing:-0.65px;">R$ 34.536</div>
<div class="t" style="left:49.8px;top:397px;font-size:11px;color:#404040;font-weight:bold;">Lucro/Prejuízo</div>
<div class="a" style="left:40px;top:412px;width:179px;height:43.5px;background:#54ad3e;"></div>
<div class="t" style="left:-20.4px;width:300px;text-align:center;top:423px;font-size:24.5px;color:#fff;font-weight:bold;letter-spacing:-0.65px;">R$ 23.774</div>
<div class="t" style="left:49.8px;top:471px;font-size:11px;color:#404040;font-weight:bold;">Acumulado</div>
<div class="a" style="left:40px;top:487.6px;width:179px;height:43.2px;background:#54ad3e;"></div>
<div class="t" style="left:-20.4px;width:300px;text-align:center;top:498px;font-size:24.5px;color:#fff;font-weight:bold;letter-spacing:-0.65px;">R$ 123.774</div>
<div class="t" style="left:231.6px;top:245px;font-size:10.9px;color:#404040;font-weight:bold;">Fluxo de Caixa</div>
<div class="a" style="left:229px;top:260.5px;width:795.5px;height:120px;border:1px solid #d9d9d9;background:#fff"></div>
<div class="a" style="left:240px;top:271.8px;width:774.4px;height:77px;background:#f2f2f2;"></div>
<div class="a" style="left:240px;top:317.6px;width:774.4px;height:1px;background:#d9d9d9;"></div>
<svg class="a" style="left:0;top:0" width="1060" height="683"><rect x="248.60" y="313.90" width="23.6" height="3.7" fill="#54ad3e"/><rect x="272.20" y="307.60" width="23.6" height="10.0" fill="#f04530"/><rect x="313.15" y="311.40" width="23.6" height="6.2" fill="#54ad3e"/><rect x="336.75" y="311.40" width="23.6" height="6.2" fill="#f04530"/><rect x="377.71" y="300.10" width="23.6" height="17.5" fill="#54ad3e"/><rect x="401.31" y="311.40" width="23.6" height="6.2" fill="#f04530"/><rect x="442.26" y="309.00" width="23.6" height="8.6" fill="#54ad3e"/><rect x="465.86" y="305.30" width="23.6" height="12.3" fill="#f04530"/><rect x="506.82" y="316.60" width="23.6" height="1.0" fill="#54ad3e"/><rect x="530.42" y="297.90" width="23.6" height="19.7" fill="#f04530"/><rect x="571.37" y="308.30" width="23.6" height="9.3" fill="#54ad3e"/><rect x="594.97" y="307.70" width="23.6" height="9.9" fill="#f04530"/><rect x="635.93" y="293.20" width="23.6" height="24.4" fill="#54ad3e"/><rect x="659.53" y="307.40" width="23.6" height="10.2" fill="#f04530"/><rect x="700.48" y="289.80" width="23.6" height="27.8" fill="#54ad3e"/><rect x="724.08" y="314.70" width="23.6" height="2.9" fill="#f04530"/><rect x="765.04" y="289.80" width="23.6" height="27.8" fill="#54ad3e"/><rect x="788.64" y="314.70" width="23.6" height="2.9" fill="#f04530"/><rect x="829.59" y="298.90" width="23.6" height="18.7" fill="#54ad3e"/><rect x="853.19" y="298.90" width="23.6" height="18.7" fill="#f04530"/><rect x="894.15" y="285.50" width="23.6" height="32.1" fill="#54ad3e"/><rect x="917.75" y="312.80" width="23.6" height="4.8" fill="#f04530"/><path d="M272.20 323.95 C282.96 322.89 315.24 320.56 336.75 317.60 C358.27 314.64 379.79 305.61 401.31 306.20 C422.83 306.80 444.35 316.08 465.86 321.16 C487.38 326.24 508.90 337.21 530.42 336.68 C551.94 336.15 573.45 323.50 594.97 317.97 C616.49 312.44 638.01 307.70 659.53 303.51 C681.05 299.32 702.56 294.58 724.08 292.82 C745.60 291.07 767.12 288.89 788.64 292.96 C810.15 297.04 831.67 317.75 853.19 317.29 C874.71 316.83 896.23 290.17 917.75 290.22 C939.26 290.27 971.54 313.04 982.30 317.60" stroke="#f9b800" stroke-width="1.6" fill="none"/></svg>
<div class="t" style="left:122.2px;width:300px;text-align:center;top:326px;font-size:8.4px;color:#595959;-webkit-text-stroke:0.1px #595959;">Janeiro</div>
<div class="t" style="left:186.8px;width:300px;text-align:center;top:326px;font-size:8.4px;color:#595959;-webkit-text-stroke:0.1px #595959;">Fevereiro</div>
<div class="t" style="left:251.3px;width:300px;text-align:center;top:326px;font-size:8.4px;color:#595959;-webkit-text-stroke:0.1px #595959;">Março</div>
<div class="t" style="left:315.9px;width:300px;text-align:center;top:326px;font-size:8.4px;color:#595959;-webkit-text-stroke:0.1px #595959;">Abril</div>
<div class="t" style="left:380.4px;width:300px;text-align:center;top:326px;font-size:8.4px;color:#595959;-webkit-text-stroke:0.1px #595959;">Maio</div>
<div class="t" style="left:445.0px;width:300px;text-align:center;top:326px;font-size:8.4px;color:#595959;-webkit-text-stroke:0.1px #595959;">Junho</div>
<div class="t" style="left:509.5px;width:300px;text-align:center;top:326px;font-size:8.4px;color:#595959;-webkit-text-stroke:0.1px #595959;">Julho</div>
<div class="t" style="left:574.1px;width:300px;text-align:center;top:326px;font-size:8.4px;color:#595959;-webkit-text-stroke:0.1px #595959;">Agosto</div>
<div class="t" style="left:638.6px;width:300px;text-align:center;top:326px;font-size:8.4px;color:#595959;-webkit-text-stroke:0.1px #595959;">Setembro</div>
<div class="t" style="left:703.2px;width:300px;text-align:center;top:326px;font-size:8.4px;color:#595959;-webkit-text-stroke:0.1px #595959;">Outubro</div>
<div class="t" style="left:767.7px;width:300px;text-align:center;top:326px;font-size:8.4px;color:#595959;-webkit-text-stroke:0.1px #595959;">Novembro</div>
<div class="t" style="left:832.3px;width:300px;text-align:center;top:326px;font-size:8.4px;color:#595959;-webkit-text-stroke:0.1px #595959;">Dezembro</div>
<div class="t" style="left:122.2px;width:300px;text-align:center;top:309px;font-size:7.3px;color:#404040;-webkit-text-stroke:0.1px #404040;">-R$ 2.062</div>
<div class="t" style="left:186.8px;width:300px;text-align:center;top:303px;font-size:7.3px;color:#404040;-webkit-text-stroke:0.1px #404040;">R$ 0</div>
<div class="t" style="left:251.3px;width:300px;text-align:center;top:292px;font-size:7.3px;color:#404040;-webkit-text-stroke:0.1px #404040;">R$ 3.700</div>
<div class="t" style="left:315.9px;width:300px;text-align:center;top:306px;font-size:7.3px;color:#404040;-webkit-text-stroke:0.1px #404040;">-R$ 1.155</div>
<div class="t" style="left:380.4px;width:300px;text-align:center;top:322px;font-size:7.3px;color:#404040;-webkit-text-stroke:0.1px #404040;">-R$ 6.196</div>
<div class="t" style="left:445.0px;width:300px;text-align:center;top:303px;font-size:7.3px;color:#404040;-webkit-text-stroke:0.1px #404040;">-R$ 121</div>
<div class="t" style="left:509.5px;width:300px;text-align:center;top:289px;font-size:7.3px;color:#404040;-webkit-text-stroke:0.1px #404040;">R$ 4.575</div>
<div class="t" style="left:574.1px;width:300px;text-align:center;top:278px;font-size:7.3px;color:#404040;-webkit-text-stroke:0.1px #404040;">R$ 8.044</div>
<div class="t" style="left:638.6px;width:300px;text-align:center;top:278px;font-size:7.3px;color:#404040;-webkit-text-stroke:0.1px #404040;">R$ 7.999</div>
<div class="t" style="left:703.2px;width:300px;text-align:center;top:303px;font-size:7.3px;color:#404040;-webkit-text-stroke:0.1px #404040;">R$ 100</div>
<div class="t" style="left:767.7px;width:300px;text-align:center;top:276px;font-size:7.3px;color:#404040;-webkit-text-stroke:0.1px #404040;">R$ 8.890</div>
<div class="t" style="left:832.3px;width:300px;text-align:center;top:303px;font-size:7.3px;color:#404040;-webkit-text-stroke:0.1px #404040;">R$ 0</div>
<div class="a" style="left:544.2px;top:365.5px;width:17.5px;height:3.7px;background:#54ad3e;"></div>
<div class="t" style="left:564.0px;top:364px;font-size:7.5px;color:#595959;">Receita</div>
<div class="a" style="left:600.2px;top:365.5px;width:17.5px;height:3.7px;background:#f04530;"></div>
<div class="t" style="left:620.2px;top:364px;font-size:7.5px;color:#595959;">Despesa</div>
<div class="a" style="left:659.2px;top:366.8px;width:18.3px;height:1.5px;background:#f9b800;"></div>
<div class="t" style="left:679.6px;top:364px;font-size:7.5px;color:#595959;">Resultado</div>
<div class="t" style="left:231.7px;top:396px;font-size:11px;color:#404040;font-weight:bold;">Acumulado</div>
<div class="a" style="left:232.5px;top:412.3px;width:794px;height:119px;border:1px solid #d9d9d9;background:#fff"></div>
<div class="a" style="left:242.5px;top:423.2px;width:773px;height:63.5px;background:#f2f2f2;"></div>
<svg class="a" style="left:0;top:0" width="1060" height="683"><path d="M274.50 444.97 C285.24 444.97 317.48 445.23 338.96 444.97 C360.45 444.71 381.94 443.59 403.43 443.41 C424.92 443.23 446.40 443.38 467.89 443.90 C489.38 444.41 510.87 446.07 532.35 446.51 C553.84 446.96 575.33 446.88 596.82 446.56 C618.31 446.25 639.79 445.52 661.28 444.63 C682.77 443.74 704.26 442.37 725.75 441.24 C747.23 440.11 768.72 438.43 790.21 437.86 C811.70 437.29 833.18 438.45 854.67 437.82 C876.16 437.19 897.65 434.69 919.14 434.07 C940.62 433.44 972.86 434.07 983.60 434.07" stroke="#5b9bd5" stroke-width="1.6" fill="none"/></svg>
<div class="t" style="left:124.5px;width:300px;text-align:center;top:430px;font-size:7.5px;color:#404040;-webkit-text-stroke:0.1px #404040;">R$ 97.938</div>
<div class="t" style="left:124.5px;width:300px;text-align:center;top:494px;font-size:8.4px;color:#595959;-webkit-text-stroke:0.1px #595959;">Janeiro</div>
<div class="t" style="left:189.0px;width:300px;text-align:center;top:430px;font-size:7.5px;color:#404040;-webkit-text-stroke:0.1px #404040;">R$ 97.938</div>
<div class="t" style="left:189.0px;width:300px;text-align:center;top:494px;font-size:8.4px;color:#595959;-webkit-text-stroke:0.1px #595959;">Fevereiro</div>
<div class="t" style="left:253.4px;width:300px;text-align:center;top:428px;font-size:7.5px;color:#404040;-webkit-text-stroke:0.1px #404040;">R$ 101.638</div>
<div class="t" style="left:253.4px;width:300px;text-align:center;top:494px;font-size:8.4px;color:#595959;-webkit-text-stroke:0.1px #595959;">Março</div>
<div class="t" style="left:317.9px;width:300px;text-align:center;top:429px;font-size:7.5px;color:#404040;-webkit-text-stroke:0.1px #404040;">R$ 100.483</div>
<div class="t" style="left:317.9px;width:300px;text-align:center;top:494px;font-size:8.4px;color:#595959;-webkit-text-stroke:0.1px #595959;">Abril</div>
<div class="t" style="left:382.4px;width:300px;text-align:center;top:431px;font-size:7.5px;color:#404040;-webkit-text-stroke:0.1px #404040;">R$ 94.287</div>
<div class="t" style="left:382.4px;width:300px;text-align:center;top:494px;font-size:8.4px;color:#595959;-webkit-text-stroke:0.1px #595959;">Maio</div>
<div class="t" style="left:446.8px;width:300px;text-align:center;top:431px;font-size:7.5px;color:#404040;-webkit-text-stroke:0.1px #404040;">R$ 94.166</div>
<div class="t" style="left:446.8px;width:300px;text-align:center;top:494px;font-size:8.4px;color:#595959;-webkit-text-stroke:0.1px #595959;">Junho</div>
<div class="t" style="left:511.3px;width:300px;text-align:center;top:429px;font-size:7.5px;color:#404040;-webkit-text-stroke:0.1px #404040;">R$ 98.741</div>
<div class="t" style="left:511.3px;width:300px;text-align:center;top:494px;font-size:8.4px;color:#595959;-webkit-text-stroke:0.1px #595959;">Julho</div>
<div class="t" style="left:575.7px;width:300px;text-align:center;top:426px;font-size:7.5px;color:#404040;-webkit-text-stroke:0.1px #404040;">R$ 106.785</div>
<div class="t" style="left:575.7px;width:300px;text-align:center;top:494px;font-size:8.4px;color:#595959;-webkit-text-stroke:0.1px #595959;">Agosto</div>
<div class="t" style="left:640.2px;width:300px;text-align:center;top:423px;font-size:7.5px;color:#404040;-webkit-text-stroke:0.1px #404040;">R$ 114.784</div>
<div class="t" style="left:640.2px;width:300px;text-align:center;top:494px;font-size:8.4px;color:#595959;-webkit-text-stroke:0.1px #595959;">Setembro</div>
<div class="t" style="left:704.7px;width:300px;text-align:center;top:423px;font-size:7.5px;color:#404040;-webkit-text-stroke:0.1px #404040;">R$ 114.884</div>
<div class="t" style="left:704.7px;width:300px;text-align:center;top:494px;font-size:8.4px;color:#595959;-webkit-text-stroke:0.1px #595959;">Outubro</div>
<div class="t" style="left:769.1px;width:300px;text-align:center;top:419px;font-size:7.5px;color:#404040;-webkit-text-stroke:0.1px #404040;">R$ 123.774</div>
<div class="t" style="left:769.1px;width:300px;text-align:center;top:494px;font-size:8.4px;color:#595959;-webkit-text-stroke:0.1px #595959;">Novembro</div>
<div class="t" style="left:833.6px;width:300px;text-align:center;top:419px;font-size:7.5px;color:#404040;-webkit-text-stroke:0.1px #404040;">R$ 123.774</div>
<div class="t" style="left:833.6px;width:300px;text-align:center;top:494px;font-size:8.4px;color:#595959;-webkit-text-stroke:0.1px #595959;">Dezembro</div>
<div class="a" style="left:600.5px;top:516.8px;width:19.5px;height:1.5px;background:#5b9bd5;"></div>
<div class="t" style="left:621.0px;top:514px;font-size:7.6px;color:#595959;">Acumulado</div>
<div class="a" style="left:1046px;top:149px;width:14px;height:492px;background:#e6e6e6;"></div>
<div class="a" style="left:1046px;top:163px;width:1px;height:478px;background:#c6c6c6;"></div>
<div class="a" style="left:1047.5px;top:150px;width:11px;height:11px;background:#fff;"></div>
<svg class="a" style="left:1050px;top:153.5px;" width="6" height="4" viewBox="0 0 6 4"><path d="M0 3.5 L3 0 L6 3.5 Z" fill="#666"/></svg>
<div class="a" style="left:1047.5px;top:163px;width:11px;height:441px;background:#fff;"></div>
<div class="a" style="left:1047.5px;top:604px;width:11px;height:25.5px;background:#d4d4d4;"></div>
<div class="a" style="left:1047.5px;top:629.5px;width:11px;height:10.5px;background:#fff;"></div>
<svg class="a" style="left:1050px;top:633px;" width="6" height="4" viewBox="0 0 6 4"><path d="M0 0 L3 3.5 L6 0 Z" fill="#666"/></svg>
<div class="a" style="left:0px;top:640.5px;width:1060px;height:15px;background:#e6e6e6;"></div>
<div class="a" style="left:0px;top:640px;width:1046px;height:1px;background:#d0d0d0;"></div>
<svg class="a" style="left:11.5px;top:645px;" width="4" height="6" viewBox="0 0 4 6"><path d="M3.5 0 V6 L0 3 Z" fill="#c0c0c0"/></svg>
<svg class="a" style="left:26.5px;top:645px;" width="4" height="6" viewBox="0 0 4 6"><path d="M0 0 V6 L3.5 3 Z" fill="#217346"/></svg>
<div class="a" style="left:52px;top:642px;width:1px;height:12px;background:#c6c6c6;"></div>
<div class="a" style="left:99px;top:642px;width:1px;height:12px;background:#c6c6c6;"></div>
<div class="a" style="left:145px;top:642px;width:1px;height:12px;background:#c6c6c6;"></div>
<div class="a" style="left:191px;top:642px;width:1px;height:12px;background:#c6c6c6;"></div>
<div class="a" style="left:215px;top:642px;width:1px;height:12px;background:#c6c6c6;"></div>
<div class="a" style="left:239px;top:642px;width:1px;height:12px;background:#c6c6c6;"></div>
<div class="a" style="left:266px;top:642px;width:1px;height:12px;background:#c6c6c6;"></div>
<div class="a" style="left:291px;top:642px;width:1px;height:12px;background:#c6c6c6;"></div>
<div class="a" style="left:316px;top:642px;width:1px;height:12px;background:#c6c6c6;"></div>
<div class="a" style="left:340px;top:642px;width:1px;height:12px;background:#c6c6c6;"></div>
<div class="a" style="left:362px;top:642px;width:1px;height:12px;background:#c6c6c6;"></div>
<div class="a" style="left:387px;top:642px;width:1px;height:12px;background:#c6c6c6;"></div>
<div class="a" style="left:412px;top:642px;width:1px;height:12px;background:#c6c6c6;"></div>
<div class="a" style="left:436px;top:642px;width:1px;height:12px;background:#c6c6c6;"></div>
<div class="a" style="left:462px;top:642px;width:1px;height:12px;background:#c6c6c6;"></div>
<div class="a" style="left:488px;top:642px;width:1px;height:12px;background:#c6c6c6;"></div>
<div class="a" style="left:514px;top:642px;width:1px;height:12px;background:#c6c6c6;"></div>
<div class="a" style="left:555px;top:642px;width:1px;height:12px;background:#c6c6c6;"></div>
<div class="a" style="left:596px;top:642px;width:1px;height:12px;background:#c6c6c6;"></div>
<div class="t" style="left:-75.2px;width:300px;text-align:center;top:644px;font-size:8.95px;color:#444;">CAD_prd</div>
<div class="t" style="left:-27.8px;width:300px;text-align:center;top:644px;font-size:8.95px;color:#444;">CAD_prf</div>
<div class="t" style="left:17.4px;width:300px;text-align:center;top:644px;font-size:8.87px;color:#444;">CAD_for</div>
<div class="t" style="left:52.3px;width:300px;text-align:center;top:644px;font-size:8.4px;color:#444;">Jan</div>
<div class="t" style="left:76.3px;width:300px;text-align:center;top:644px;font-size:8.7px;color:#444;">Fev</div>
<div class="t" style="left:101.8px;width:300px;text-align:center;top:644px;font-size:9.0px;color:#444;">Mar</div>
<div class="t" style="left:127.3px;width:300px;text-align:center;top:644px;font-size:9.0px;color:#444;">Abr</div>
<div class="t" style="left:152.8px;width:300px;text-align:center;top:644px;font-size:9.0px;color:#444;">Mai</div>
<div class="t" style="left:177.9px;width:300px;text-align:center;top:644px;font-size:8.8px;color:#444;">Jun</div>
<div class="t" style="left:200.6px;width:300px;text-align:center;top:644px;font-size:9.0px;color:#444;">Jul</div>
<div class="t" style="left:224.7px;width:300px;text-align:center;top:644px;font-size:9.0px;color:#444;">Ago</div>
<div class="t" style="left:249.5px;width:300px;text-align:center;top:644px;font-size:8.7px;color:#444;">Set</div>
<div class="t" style="left:273.7px;width:300px;text-align:center;top:644px;font-size:9.0px;color:#444;">Out</div>
<div class="t" style="left:300.1px;width:300px;text-align:center;top:644px;font-size:9.0px;color:#444;">Nov</div>
<div class="t" style="left:326.0px;width:300px;text-align:center;top:644px;font-size:8.9px;color:#444;">Dez</div>
<div class="t" style="left:351.4px;width:300px;text-align:center;top:644px;font-size:8.6px;color:#444;">ESC</div>
<div class="t" style="left:384.1px;width:300px;text-align:center;top:644px;font-size:9.0px;color:#444;">AN_ind</div>
<div class="t" style="left:425.8px;width:300px;text-align:center;top:644px;font-size:8.6px;color:#444;">REL_fcx</div>
<div class="t" style="left:467.6px;width:300px;text-align:center;top:644px;font-size:8.6px;color:#444;">REL_est</div>
<div class="a" style="left:638.5px;top:640px;width:28.5px;height:14.5px;background:#fff;"></div>
<div class="a" style="left:638.5px;top:652.5px;width:28.5px;height:2px;background:#217346;"></div>
<div class="t" style="left:643.2px;top:644px;font-size:9.0px;color:#217346;font-weight:bold;">dFin</div>
<div class="t" style="left:670.7px;top:645px;font-size:8px;color:#999;">(</div>
<div class="t" style="left:676.8px;top:644px;font-size:9px;color:#217346;font-weight:bold;">...</div>
<svg class="a" style="left:691.5px;top:643.5px;" width="11" height="11" viewBox="0 0 11 11"><circle cx="5.2" cy="5" r="4.5" stroke="#777" fill="none" stroke-width="0.9"/><path d="M5.2 2.5 V7.5 M2.7 5 H7.7" stroke="#777" stroke-width="0.9"/></svg>
<div class="a" style="left:711px;top:644.5px;width:1px;height:1.2px;background:#999;"></div>
<div class="a" style="left:711px;top:647.5px;width:1px;height:1.2px;background:#999;"></div>
<div class="a" style="left:711px;top:650.5px;width:1px;height:1.2px;background:#999;"></div>
<div class="a" style="left:721.5px;top:642.4px;width:9px;height:11.2px;background:#fff;"></div>
<svg class="a" style="left:724.5px;top:645.5px;" width="4" height="6" viewBox="0 0 4 6"><path d="M3.5 0 V6 L0 3 Z" fill="#555"/></svg>
<div class="a" style="left:730.5px;top:642.4px;width:262px;height:11.2px;background:#fff;"></div>
<div class="a" style="left:992.5px;top:642.4px;width:40px;height:11.2px;background:#d9d9d9;"></div>
<div class="a" style="left:1034.3px;top:642.4px;width:11.2px;height:11.2px;background:#fff;"></div>
<svg class="a" style="left:1038px;top:645.5px;" width="4" height="6" viewBox="0 0 4 6"><path d="M0 0 V6 L3.5 3 Z" fill="#555"/></svg>
<div class="a" style="left:0px;top:655.5px;width:1060px;height:22.5px;background:#f3f3f3;"></div>
<div class="t" style="left:4.9px;top:664px;font-size:7.2px;color:#333;">Listo</div>
<svg class="a" style="left:33px;top:661.5px;" width="12" height="11" viewBox="0 0 12 11"><rect x="0.5" y="2" width="10" height="8.5" fill="#fff" stroke="#999" stroke-width="0.8"/><rect x="0.5" y="2" width="10" height="2" fill="#888"/><circle cx="2.5" cy="2" r="2" fill="#777"/><path d="M3 5.5 V10 M6 5.5 V10 M0.5 7.5 H10.5" stroke="#bbb" stroke-width="0.6"/></svg>
<div class="a" style="left:872.3px;top:654.5px;width:22.5px;height:22.5px;background:#d5d5d5;"></div>
<svg class="a" style="left:877px;top:661px;" width="12" height="12" viewBox="0 0 12 12"><rect x="0" y="0" width="12" height="12" fill="#9a9a9a"/><path d="M4 0 V12 M8 0 V12 M0 4 H12 M0 8 H12" stroke="#cfcfcf" stroke-width="0.8"/></svg>
<svg class="a" style="left:900px;top:661px;" width="13" height="12" viewBox="0 0 13 12"><rect x="0.5" y="0.5" width="12" height="11" fill="none" stroke="#b0b0b0"/><rect x="4" y="2" width="5" height="8" fill="none" stroke="#b0b0b0"/></svg>
<svg class="a" style="left:923.7px;top:661px;" width="13" height="12" viewBox="0 0 13 12"><rect x="0.5" y="0.5" width="12" height="11" fill="none" stroke="#b0b0b0"/><path d="M0.5 6.5 H12.5 M4.5 0.5 V6.5 M8.5 0.5 V6.5" stroke="#b0b0b0" fill="none"/></svg>
<div class="a" style="left:944.5px;top:666.5px;width:5px;height:1.2px;background:#555;"></div>
<div class="a" style="left:952.5px;top:666.8px;width:70.5px;height:1px;background:#c8c8c8;"></div>
<div class="a" style="left:984.8px;top:661.5px;width:3.5px;height:10.5px;background:#666;"></div>
<div class="a" style="left:1024.5px;top:666.5px;width:6px;height:1.2px;background:#555;"></div>
<div class="a" style="left:1027px;top:664px;width:1.2px;height:6px;background:#555;"></div>
<div class="t" style="left:1037.5px;top:665px;font-size:7.1px;color:#333;">100%</div>
<div class="a" style="left:0px;top:676.5px;width:1060px;height:1.5px;background:#fafafa;"></div>
<div class="a" style="left:0px;top:678px;width:1060px;height:6px;background:#0b0e13;"></div>
<div class="a" style="left:346px;top:678px;width:34px;height:6px;background:#3a3b3d;"></div>
</body></html>
